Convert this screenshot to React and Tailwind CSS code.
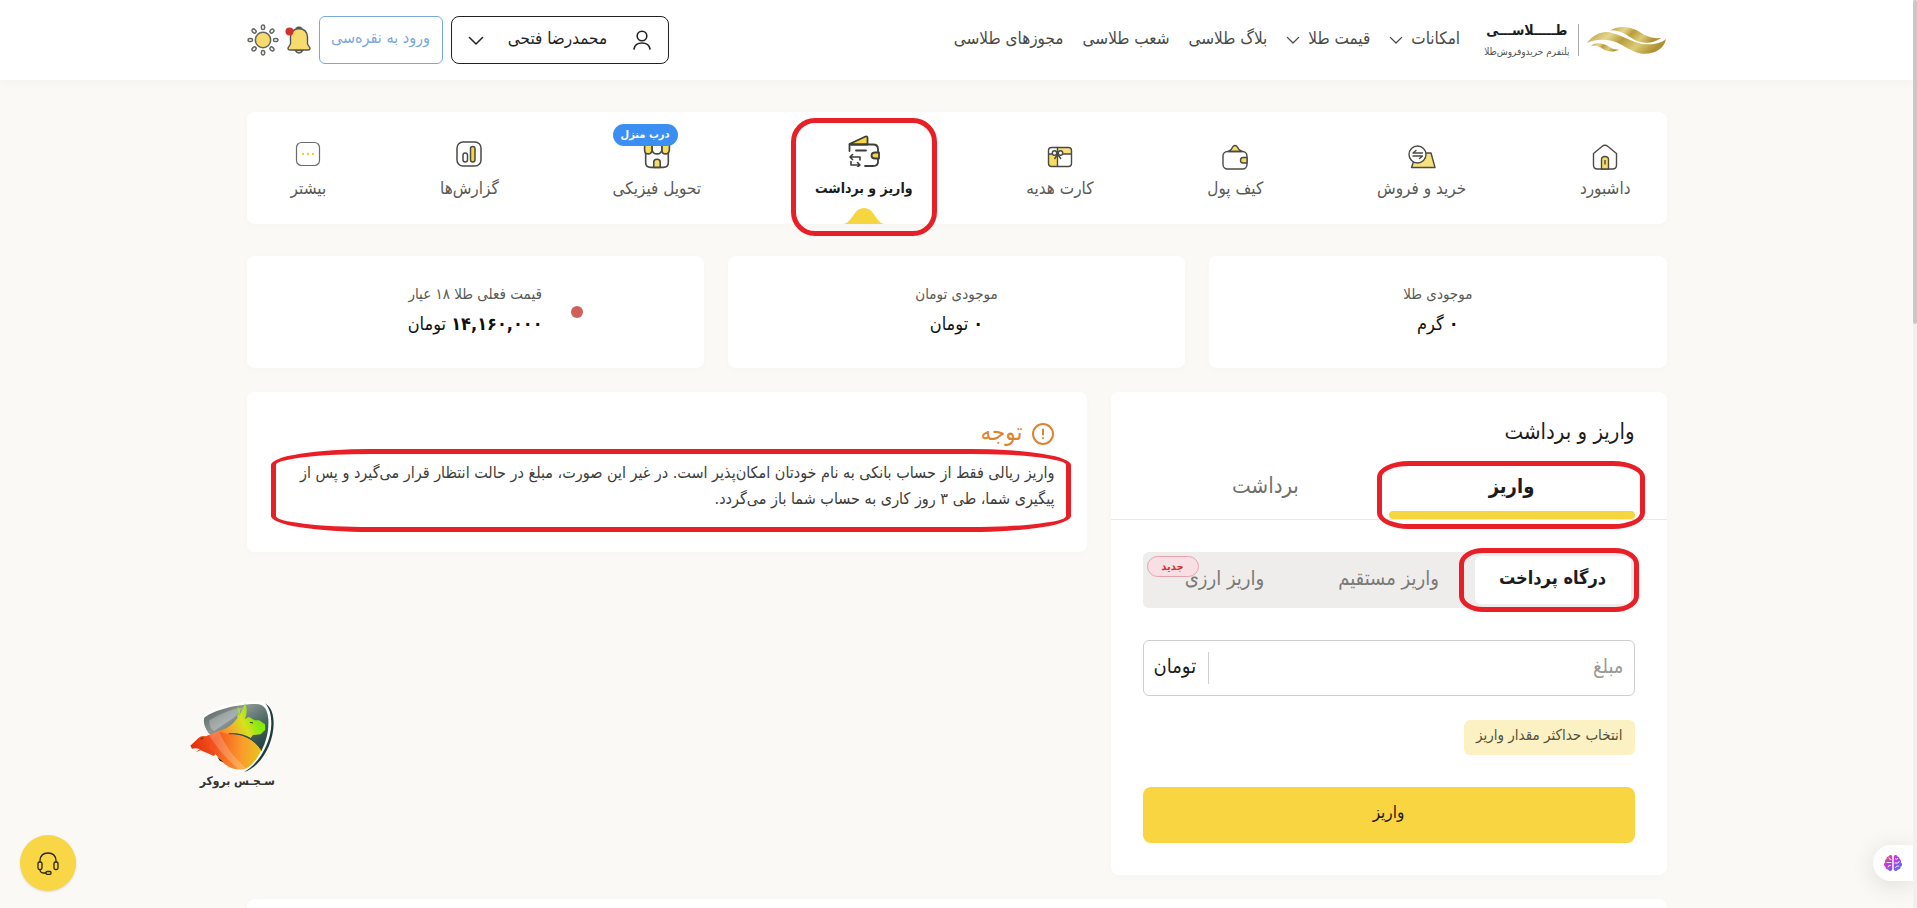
import React, { useState } from "react";
import { FaBrain } from "react-icons/fa";

const ChevronIcon = ({ className }) => (
  <svg viewBox="0 0 16 9" className={className} fill="none" stroke="currentColor" strokeWidth="1.5" strokeLinecap="round" strokeLinejoin="round">
    <path d="M1.5 1.5 L8 8 L14.5 1.5" />
  </svg>
);

const WaveLogo = () => (
  <svg viewBox="0 0 82 28" className="h-7 w-20" aria-label="طلاسی">
    <defs>
      <linearGradient id="gold" x1="0" y1="0" x2="1" y2="0.3">
        <stop offset="0" stopColor="#b59a3c" />
        <stop offset="0.3" stopColor="#e6d68c" />
        <stop offset="0.5" stopColor="#b89d3e" />
        <stop offset="0.75" stopColor="#dccb76" />
        <stop offset="1" stopColor="#b09235" />
      </linearGradient>
    </defs>
    <path fill="url(#gold)" d="M24 4 C33 -1 43 0 51 4 C59 9 65 13 76 12 C68 18 57 18 49 14 C41 9 35 4 24 4Z" />
    <path fill="url(#gold)" d="M0 17 C8 7 17 4 27 7 C38 10 46 16 57 18 C67 19 75 18 81 13 C79 24 68 29 56 28 C44 26 37 18 26 15 C17 13 9 13 0 17Z" />
    <path fill="url(#gold)" d="M4 20 C9 16 16 17 21 20 C25 23 28 24 33 24 C27 27 20 26 16 23 C12 20 9 20 4 20Z" />
  </svg>
);

const HomeIcon = () => (
  <svg viewBox="0 0 26 26" className="mt-[6px] h-[26px] w-[26px]" fill="none" stroke="#4a4a46" strokeWidth="1.4" strokeLinejoin="round">
    <path d="M1.5 9.500 L10 2.5 Q13 0 16 2.5 L24.500 9.500 V21 Q24.500 25 20.5 25 H5.5 Q1.500 25 1.500 21Z" />
    <path d="M9.5 25 V15.5 Q9.5 12.5 13 12.5 Q16.500 12.5 16.5 15.500 V25Z" fill="#f6dc5f" />
    <path d="M13 16 V20.500" />
  </svg>
);

const TradeIcon = () => (
  <svg viewBox="0 0 28 24" className="mt-[6px] h-6 w-7" fill="none" stroke="#4a4a46" strokeWidth="1.4" strokeLinejoin="round" strokeLinecap="round">
    <path d="M3.500 22.5 L8.500 8 H23 L27 22.5Z" fill="#f6e27c" />
    <circle cx="9.500" cy="9.5" r="8.500" fill="#fff" />
    <path d="M14.500 8 H5 L8 5.500 M5 11 H14.500 L11.500 13.500" />
  </svg>
);

const PurseIcon = () => (
  <svg viewBox="0 0 26 26" className="mt-[6px] h-[26px] w-[26px]" fill="none" stroke="#4a4a46" strokeWidth="1.4" strokeLinejoin="round">
    <path d="M6.500 7.500 Q9.5 6 11 2.500 Q13 0.5 15 2.500 Q16.500 6 20 7.500Z" fill="#f6dc5f" />
    <rect x="1" y="7.500" width="24" height="17.500" rx="4.5" />
    <path d="M25 13.500 H21 Q18.500 13.500 18.500 16.300 Q18.500 19 21 19 H25Z" fill="#f6dc5f" />
  </svg>
);

const GiftIcon = () => (
  <svg viewBox="0 0 26 22" className="mt-[6px] h-[22px] w-[26px]" fill="none" stroke="#4a4a46" strokeWidth="1.4" strokeLinejoin="round">
    <path d="M10.500 1.5 H21.500 Q24.500 1.500 24.500 4.500 V8 H10.500Z" fill="#f6e27c" stroke="none" />
    <path d="M1.500 8 H10.500 V20.500 H4.500 Q1.500 20.500 1.500 17.500Z" fill="#f6dc5f" stroke="none" />
    <rect x="1.500" y="1.500" width="23" height="19" rx="3" />
    <path d="M1.500 8 H24.500 M10.500 1.500 V20.500 M10.500 8.500 L7.500 13 M11 8.500 L14 13" />
    <circle cx="7.500" cy="7" r="2.200" fill="#fff" />
    <circle cx="13.500" cy="7" r="2.200" fill="#fff" />
  </svg>
);

const WalletIcon = () => (
  <svg viewBox="0 0 32 32" className="mb-[6px] h-8 w-8" fill="none" stroke="#3d3d3a" strokeWidth="1.800" strokeLinejoin="round" strokeLinecap="round">
    <path d="M1.500 9 L17.500 1.500 Q19.500 1 19.500 3 V9.500 H4Z" fill="#f6d63f" />
    <path d="M1.500 16 V9.500 M3 9.500 H25 Q30 9.500 30 14 V27 Q30 31 25 31 H17" />
    <path d="M8 15.500 H18" />
    <path d="M31 17.500 H27 Q23.500 17.500 23.500 20.500 Q23.500 23.500 27 23.500 H31Z" fill="#f6d63f" />
    <path d="M4.500 19.500 L2 22 L4.500 24.500 M2.500 22 H12 V25 M3 26.500 V30 H11.500 M9.500 27.500 L12 30 L9.500 32" strokeWidth="1.600" />
  </svg>
);

const ShopIcon = () => (
  <svg viewBox="0 0 26 26" className="mt-[2px] h-7 w-7" fill="none" stroke="#4a4a46" strokeWidth="1.500" strokeLinejoin="round">
    <path d="M2.500 10 V20 Q2.500 24.500 7 24.500 H19 Q23.500 24.500 23.500 20 V10" />
    <path d="M1.500 2 H8.500 V8.500 Q8 12 5 12 Q1.500 12 1.500 8.500Z M17.500 2 H24.500 V8.500 Q24 12 21 12 Q17.500 12 17.500 8.500Z" fill="#f6dc5f" />
    <path d="M8.500 2 H17.500 V8.500 Q17 12 13 12 Q9 12 8.500 8.500Z" fill="#fff" />
    <path d="M10 24.500 V19.500 Q10 17 13 17 Q16 17 16 19.500 V24.500Z" fill="#f6dc5f" />
  </svg>
);

const ReportIcon = () => (
  <svg viewBox="0 0 26 26" className="h-[26px] w-[26px]" fill="none" stroke="#4a4a46" strokeWidth="1.500">
    <rect x="1" y="1" width="24" height="24" rx="6" />
    <rect x="7" y="12" width="4.500" height="9" rx="2.200" />
    <rect x="14.500" y="5.500" width="4.500" height="15.500" rx="2.200" fill="#f6d63f" />
  </svg>
);

const MoreIcon = () => (
  <svg viewBox="0 0 26 26" className="h-[26px] w-[26px]" fill="none" stroke="#6b6b67" strokeWidth="1.200">
    <rect x="1.500" y="1.500" width="23" height="23" rx="5" />
    <g fill="#f0cd35" stroke="none">
      <circle cx="8" cy="13" r="1.200" />
      <circle cx="13" cy="13" r="1.200" />
      <circle cx="18" cy="13" r="1.200" />
    </g>
  </svg>
);

const SunIcon = () => (
  <svg viewBox="0 0 30 30" className="h-8 w-8" fill="none" stroke="#666662" strokeWidth="1.400">
    <circle cx="15" cy="15" r="7.200" fill="#f6dc6f" />
    {[0, 45, 90, 135, 180, 225, 270, 315].map((angle) => (
      <rect key={angle} x="13.500" y="1" width="3" height="4.200" rx="1.500" transform={`rotate(${angle} 15 15)`} />
    ))}
  </svg>
);

const BellIcon = () => (
  <svg viewBox="0 0 26 28" className="h-7 w-[26px]" fill="none" stroke="#55554f" strokeWidth="1.400" strokeLinejoin="round">
    <path d="M10 24 Q14 30 18 24Z" fill="#d6d6cf" />
    <path d="M5.500 18 V11 Q6 3 14 2.500 Q22 3 22.500 11 V18 L25 22 Q25 24 23 24 H5 Q3 24 3 22Z" fill="#f6dc6f" />
    <path d="M11 2.500 Q14 0 17 2.500" />
    <circle cx="4.500" cy="5.500" r="4" fill="#d2322d" stroke="none" />
  </svg>
);

const UserIcon = () => (
  <svg viewBox="0 0 18 20" className="h-5 w-5" fill="none" stroke="#222" strokeWidth="1.600" strokeLinecap="round">
    <circle cx="9" cy="6" r="4.800" />
    <path d="M1 19 Q2 13 9 13 Q16 13 17 19" />
  </svg>
);

const HeadsetIcon = () => (
  <svg viewBox="0 0 24 24" className="h-6 w-6" fill="none" stroke="#2b2710" strokeWidth="1.300" strokeLinejoin="round">
    <path d="M4 11 V9.500 Q4.500 2 12 2 Q19.500 2 20 9.500 V11" />
    <rect x="2" y="11" width="4" height="7.500" rx="1.500" />
    <rect x="18" y="11" width="4" height="7.500" rx="1.500" />
    <path d="M4 18.500 Q4 22 8 22 H10" />
    <rect x="10" y="20.500" width="5" height="2.800" rx="1" />
  </svg>
);

const BrokerLogo = () => (
  <svg viewBox="565 60 258 216" className="h-[72px] w-[86px]">
    <defs>
      <linearGradient id="shield" x1="0" y1="0" x2="1" y2="1">
        <stop offset="0" stopColor="#4e5856" />
        <stop offset="0.350" stopColor="#8c9694" />
        <stop offset="0.650" stopColor="#4a6660" />
        <stop offset="1" stopColor="#143a34" />
      </linearGradient>
      <linearGradient id="beast" gradientUnits="userSpaceOnUse" x1="570" y1="220" x2="800" y2="110">
        <stop offset="0" stopColor="#dc2a08" />
        <stop offset="0.300" stopColor="#f2501c" />
        <stop offset="0.500" stopColor="#fb9a2c" />
        <stop offset="0.720" stopColor="#d8e020" />
        <stop offset="0.850" stopColor="#8dea10" />
        <stop offset="1" stopColor="#7be80c" />
      </linearGradient>
      <linearGradient id="body" gradientUnits="userSpaceOnUse" x1="640" y1="190" x2="780" y2="200">
        <stop offset="0" stopColor="#f2501c" />
        <stop offset="0.600" stopColor="#fb9a2c" />
        <stop offset="1" stopColor="#e6c41e" />
      </linearGradient>
    </defs>
    <path fill="#fff" d="M603 100 C650 72 730 58 790 62 C815 80 822 130 808 175 C795 220 770 258 730 274 L690 270 Z" />
    <path fill="url(#shield)" d="M611 110 C640 86 710 70 765 69 C795 69 800 90 803 115 C805 150 797 180 782 210 L720 200 L625 158 Q605 130 611 110Z" />
    <path fill="#fff" opacity="0.250" d="M626 118 Q680 85 730 78 L700 110 L640 150 Q624 140 626 118Z" />
    <path fill="#1c3f3b" d="M792 66 C812 78 819 100 819 128 C818 190 780 258 730 273 C775 248 811 185 812 128 C812 100 806 80 792 66Z" />
    <path fill="url(#beast)" d="M569 194 L594 170 Q602 163 615 166 L655 150 C690 140 714 118 733 66 C741 85 738 102 732 114 L745 108 L762 118 L775 118 L793 130 L794 146 L780 160 L757 162 L750 171 C735 160 705 154 684 159 L640 225 L600 208 L586 213 L598 204 L584 202 L574 203Z" />
    <path fill="url(#body)" d="M650 152 L684 159 C730 158 765 180 782 208 C770 235 752 256 733 264 C700 272 668 252 650 226 L625 200Z" />
    <path fill="#fff" opacity="0.200" d="M655 150 L625 162 C650 205 690 245 716 267 Q728 266 735 261 C700 230 670 190 655 150Z" />
    <path d="M684 158 C725 156 758 170 783 208" fill="none" stroke="#3b4e32" strokeWidth="3" />
    <path d="M711 80 Q722 92 710 108" fill="none" stroke="#a8e81a" strokeWidth="4" />
    <path d="M600 174 L608 171 M748 124 L757 126" stroke="#38310d" strokeWidth="3" />
    <path fill="#1c1c1c" d="M650 228 L668 243 L658 240Z" />
  </svg>
);

const tabs = [
  { title: "داشبورد", icon: <HomeIcon /> },
  { title: "خرید و فروش", icon: <TradeIcon /> },
  { title: "کیف پول", icon: <PurseIcon /> },
  { title: "کارت هدیه", icon: <GiftIcon /> },
  { title: "واریز و برداشت", icon: <WalletIcon />, active: true },
  { title: "تحویل فیزیکی", icon: <ShopIcon />, badge: "درب منزل" },
  { title: "گزارش‌ها", icon: <ReportIcon /> },
  { title: "بیشتر", icon: <MoreIcon /> },
];

const menu = [
  { title: "امکانات", hasChildren: true },
  { title: "قیمت طلا", hasChildren: true },
  { title: "بلاگ طلاسی" },
  { title: "شعب طلاسی" },
  { title: "مجوزهای طلاسی" },
];

const methods = [
  { title: "درگاه پرداخت" },
  { title: "واریز مستقیم" },
  { title: "واریز ارزی", badge: "جدید" },
];

const Header = () => (
  <header className="bg-white shadow-[0_2px_12px_rgba(0,0,0,0.03)]">
    <div className="mx-auto flex h-20 max-w-[1420px] items-center justify-between">
      <div className="flex items-center">
        <a href="#" className="flex items-center gap-2">
          <WaveLogo />
          <span className="h-8 w-px bg-[#a8a8a8]" />
          <span className="flex flex-col gap-1 text-center">
            <span className="text-sm leading-5 font-bold text-[#1c1c1c]">طـــــلاســـی</span>
            <span className="text-[10px] leading-4 text-[#55554f]">پلتفرم خریدوفروش‌طلا</span>
          </span>
        </a>
        <nav className="mr-6 flex items-center gap-[19px] pb-1 text-[17px] leading-6 text-[#4a4a46]">
          {menu.map((item) => (
            <a href="#" key={item.title} className="flex items-center gap-2 whitespace-nowrap">
              {item.title}
              {item.hasChildren && <ChevronIcon className="mt-1 h-2 w-[14px]" />}
            </a>
          ))}
        </nav>
      </div>

      <div className="flex items-center gap-2">
        <button className="flex h-12 w-[218px] items-center justify-between rounded-lg border border-[#222] px-4 text-[#222]">
          <UserIcon />
          <span className="pb-1 text-[17px] leading-6">محمدرضا فتحی</span>
          <ChevronIcon className="h-[9px] w-4" />
        </button>
        <button className="h-12 w-[124px] rounded-md border border-[#7aa7e0] pb-1 text-base whitespace-nowrap text-[#7aa7e0]">
          ورود به نقره‌سی
        </button>
        <div className="flex items-center gap-[6px]">
          <button aria-label="اعلان‌ها">
            <BellIcon />
          </button>
          <button aria-label="حالت روز">
            <SunIcon />
          </button>
        </div>
      </div>
    </div>
  </header>
);

const TabsBar = () => (
  <nav className="flex h-28 justify-between rounded-lg bg-white pr-9 pl-11 shadow-[0_2px_8px_rgba(0,0,0,0.02)]">
    {tabs.map((tab) => (
      <a
        href="#"
        key={tab.title}
        className={`relative flex flex-col items-center pt-6 whitespace-nowrap ${
          tab.active ? "text-sm font-bold text-[#1c1c1c]" : "text-[17px] text-[#5a5a56]"
        }`}
      >
        <span className="flex h-9 items-center">{tab.icon}</span>
        <span className="mt-1 leading-6">{tab.title}</span>
        {tab.badge && (
          <span className="absolute top-3 left-0 rounded-full bg-[#3b8ff3] px-2 text-[11px] leading-[22px] font-bold text-white">
            {tab.badge}
          </span>
        )}
        {tab.active && (
          <>
            <svg viewBox="0 0 42 16" className="absolute bottom-0 h-4 w-[42px]" fill="#f6d63f">
              <path d="M0 16 C10 15 10 0 21 0 C32 0 32 15 42 16Z" />
            </svg>
            <span className="absolute -inset-x-6 top-[6px] -bottom-3 rounded-[24px] border-5 border-[#e81f27]" />
          </>
        )}
      </a>
    ))}
  </nav>
);

const StatCard = ({ label, amount, unit, live }) => (
  <div className="flex h-28 justify-center rounded-lg bg-white pt-6 shadow-[0_2px_8px_rgba(0,0,0,0.02)]">
    <div className="relative text-center">
      <p className="text-[15px] leading-7 text-[#5a5a56]">{label}</p>
      <p className="text-lg leading-8 text-[#111]">
        <span className="font-bold">{amount}</span> {unit}
      </p>
      {live && <span className="absolute top-[26px] -right-10 size-3 rounded-full bg-[#cf5f5b]" />}
    </div>
  </div>
);

const DepositPanel = () => {
  const [amount, setAmount] = useState("");
  const [method, setMethod] = useState(0);

  return (
    <section className="rounded-lg bg-white pt-6 pb-8 shadow-[0_2px_8px_rgba(0,0,0,0.02)]">
      <h1 className="px-8 text-[22px] leading-8 text-[#1c1c1c]">واریز و برداشت</h1>
      <div className="mt-2 grid grid-cols-2 border-b border-[#e8e8e6] px-8">
        <button className="relative flex h-[63px] flex-col justify-between pt-4 text-xl font-bold text-[#1c1c1c]">
          <span className="w-full leading-7">واریز</span>
          <span className="h-2 w-full rounded-full bg-[#f6d63f]" />
          <span className="absolute top-[5px] -right-[10px] -bottom-[10px] -left-3 rounded-[32px_/_16px] border-5 border-[#e81f27]" />
        </button>
        <button className="flex h-[63px] flex-col pt-4 text-[22px] text-[#6f6f6b]">
          <span className="w-full leading-7">برداشت</span>
        </button>
      </div>

      <div className="px-8 pt-8">
        <div className="grid h-14 grid-cols-3 gap-2 rounded-md bg-[#efedec] p-1">
          {methods.map((item, key) => (
            <button
              key={item.title}
              onClick={() => setMethod(key)}
              className={`relative rounded-md pb-1 whitespace-nowrap ${
                key === method ? "bg-white text-lg font-bold text-[#1c1c1c]" : "text-xl text-[#7a7a76]"
              }`}
            >
              {item.title}
              {key === 0 && (
                <span className="absolute -inset-y-2 -right-2 -left-4 rounded-[24px_/_16px] border-5 border-[#e81f27]" />
              )}
              {item.badge && (
                <span className="absolute top-0 left-0 w-[52px] rounded-full border border-[#e6a3b0] bg-[#f8dfe3] text-[11px] leading-[19px] font-bold text-[#c43a3a]">
                  {item.badge}
                </span>
              )}
            </button>
          ))}
        </div>

        <label className="mt-8 flex h-14 items-center rounded-md border border-[#cfcfcd] px-[10px]">
          <input
            type="text"
            placeholder="مبلغ"
            aria-label="مبلغ"
            value={amount}
            onChange={(e) => setAmount(e.target.value)}
            className="min-w-0 flex-1 pb-1 text-xl outline-none placeholder:text-[#9a9a96]"
          />
          <span className="h-8 w-px bg-[#cfcfcd]" />
          <span className="mr-3 pb-1 text-xl text-[#1c1c1c]">تومان</span>
        </label>

        <button className="mt-6 block h-[35px] rounded-md bg-[#fcf1c2] px-3 pb-1 text-[15px] text-[#55523e]">
          انتخاب حداکثر مقدار واریز
        </button>
        <button className="mt-8 block h-14 w-full rounded-lg bg-[#f8d541] pb-1 text-[17px] text-[#1c1c1c]">
          واریز
        </button>
      </div>
    </section>
  );
};

const NoticePanel = () => (
  <section className="rounded-lg bg-white px-8 pt-6 pb-10 shadow-[0_2px_8px_rgba(0,0,0,0.02)]">
    <h2 className="flex items-center gap-2 text-2xl leading-8 text-[#dc8430]">
      <svg viewBox="0 0 24 24" className="mt-1 h-6 w-6" fill="none" stroke="currentColor" strokeWidth="2" strokeLinecap="round">
        <circle cx="12" cy="12" r="10" />
        <path d="M12 7.500 V12.500 M12 16 V16.200" />
      </svg>
      توجه
    </h2>
    <div className="relative mt-3">
      <p className="text-base leading-[26px] text-[#3d3d3a]">
        واریز ریالی فقط از حساب بانکی به نام خودتان امکان‌پذیر است. در غیر این صورت، مبلغ در حالت انتظار قرار می‌گیرد و پس از
        پیگیری شما، طی ۳ روز کاری به حساب شما باز می‌گردد.
      </p>
      <span className="absolute -top-[11px] -right-4 -bottom-5 -left-2 rounded-[100px_/_16px] border-5 border-[#e81f27]" />
    </div>
  </section>
);

const App = () => {
  return (
    <div
      dir="rtl"
      lang="fa"
      className="relative h-screen overflow-hidden bg-[#faf9f6] pr-1 font-['DejaVu_Sans_Condensed','DejaVu_Sans',sans-serif]"
    >
      <Header />
      <main className="mx-auto max-w-[1420px] pt-8">
        <TabsBar />

        <div className="mt-8 grid grid-cols-3 gap-6">
          <StatCard label="موجودی طلا" amount="۰" unit="گرم" />
          <StatCard label="موجودی تومان" amount="۰" unit="تومان" />
          <StatCard label="قیمت فعلی طلا ۱۸ عیار" amount="۱۴,۱۶۰,۰۰۰" unit="تومان" live />
        </div>

        <div className="mt-6 grid grid-cols-[139fr_210fr] items-start gap-6">
          <DepositPanel />
          <NoticePanel />
        </div>

        <div className="mt-6 h-40 rounded-lg bg-white shadow-[0_2px_8px_rgba(0,0,0,0.02)]" />
      </main>

      <div className="absolute bottom-[119px] left-[189px] flex w-[86px] flex-col items-start">
        <BrokerLogo />
        <span className="text-xs leading-4 font-bold whitespace-nowrap text-[#333]">سـجـس بروکر</span>
      </div>

      <button
        aria-label="پشتیبانی"
        className="absolute bottom-[17px] left-5 flex size-14 items-center justify-center rounded-full bg-[#f8d645] shadow-sm"
      >
        <HeadsetIcon />
      </button>

      <button
        aria-label="دستیار"
        className="absolute right-1 bottom-[27px] flex h-9 w-10 items-center justify-center rounded-l-full bg-white shadow-[0_4px_24px_rgba(0,0,0,0.12)]"
      >
        <FaBrain size={18} fill="url(#brain)" />
        <svg viewBox="0 0 18 18" className="absolute size-[18px]" fill="none" stroke="#fff" strokeWidth="0.900" strokeLinecap="round">
          <linearGradient id="brain" x1="0" y1="0" x2="1" y2="1">
            <stop offset="0" stopColor="#f0603c" />
            <stop offset="0.400" stopColor="#c03ae0" />
            <stop offset="1" stopColor="#3f7df5" />
          </linearGradient>
          <path d="M9 1 V17 M3 8.500 H7 M5 4 Q5 6 7 5.500 M4 13 Q4 11 6.500 11.500 M11.500 5 Q13 6 14 4.500 M11 9 H14 L15 7.500 M11.500 13.500 Q12 11.500 14.500 12" />
        </svg>
      </button>

      {/* scrollbar */}
      <div className="absolute inset-y-0 right-0 w-1 bg-[#f0f0f0]">
        <div className="h-[324px] rounded-full bg-[#c8c8c8]" />
      </div>
    </div>
  );
};

export default App;
